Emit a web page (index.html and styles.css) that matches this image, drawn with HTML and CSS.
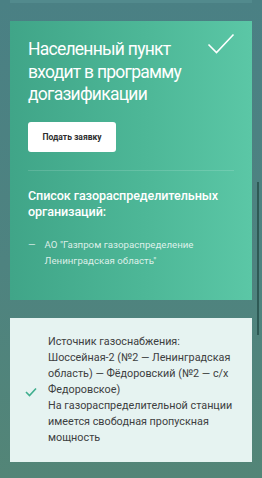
FILE: index.html
```html
<!DOCTYPE html>
<html lang="ru">
<head>
<meta charset="utf-8">
<link rel="stylesheet" href="styles.css">
</head>
<body>
<div class="page">
  <div class="prev-card"></div>
  <section class="green-card">
    <div class="head">
      <h1 class="title">Населенный пункт входит в программу догазификации</h1>
      <svg class="big-check" width="28" height="22" viewBox="0 0 28 22"><path d="M1.5 11.5 L9.5 19.5 L26.5 1.5" fill="none" stroke="#fff" stroke-width="1.6"/></svg>
    </div>
    <button class="btn">Подать заявку</button>
    <div class="divider"></div>
    <h2 class="list-title">Список газораспределительных организаций:</h2>
    <ul class="orgs">
      <li><span class="dash">—</span><span>АО "Газпром газораспределение Ленинградская область"</span></li>
    </ul>
  </section>
  <section class="info-card">
    <svg class="small-check" width="12" height="10" viewBox="0 0 12 10"><path d="M1 5 L4.5 8.5 L11 1.5" fill="none" stroke="#3fae8e" stroke-width="1.6"/></svg>
    <p class="info-text">Источник газоснабжения: Шоссейная-2 (№2 — Ленинградская область) — Фёдоровский (№2 — с/х Федоровское)<br>На газораспределительной станции имеется свободная пропускная мощность</p>
  </section>
  <div class="scrollbar"></div>
</div>
</body>
</html>
```
FILE: styles.css
```css
* { box-sizing: border-box; }
html, body { margin: 0; padding: 0; }
body {
  width: 262px;
  height: 478px;
  overflow: hidden;
  background: linear-gradient(180deg, #4a8084 0%, #4e8380 55%, #538577 100%);
  font-family: Roboto, "Noto Sans", sans-serif;
}
.page {
  position: relative;
  padding: 0 10px;
  height: 478px;
}
.prev-card {
  height: 3px;
  background: #528a8d;
}
.green-card {
  margin-top: 18px;
  height: 279px;
  padding: 17px 18px 0 18px;
  background: linear-gradient(90deg, #40a588 0%, #4db797 55%, #5bc7a6 100%);
  color: #fff;
}
.head {
  display: flex;
  justify-content: space-between;
  align-items: flex-start;
}
.title {
  margin: 0;
  font-weight: 400;
  font-size: 17.5px;
  line-height: 22.5px;
  width: 160px;
  letter-spacing: -0.75px;
}
.big-check {
  margin-top: -5px;
  margin-right: -1px;
}
.btn {
  display: block;
  margin-top: 16px;
  width: 88px;
  height: 30px;
  border: 0;
  border-radius: 3px;
  background: #fff;
  color: #2e2e2e;
  font-family: Roboto, sans-serif;
  font-weight: 700;
  font-size: 8.5px;
  padding: 0;
}
.divider {
  margin-top: 18px;
  height: 1px;
  background: rgba(255,255,255,0.14);
}
.list-title {
  margin: 17px 0 0;
  font-weight: 500;
  font-size: 12.6px;
  line-height: 16px;
  letter-spacing: -0.1px;
}
.orgs {
  list-style: none;
  margin: 17px 0 0;
  padding: 0;
  font-size: 9.7px;
  line-height: 16px;
  color: rgba(255,255,255,0.82);
}
.orgs li {
  display: flex;
  gap: 9px;
}
.dash { width: 8px; }
.info-card {
  margin-top: 18px;
  height: 144px;
  background: #e6f3f1;
  display: flex;
  align-items: center;
  padding: 0 10px 0 15px;
}
.small-check { flex: none; margin-right: 11px; margin-top: 4px; }
.info-text {
  margin: 0;
  font-size: 10.8px;
  line-height: 16px;
  color: #3d403f;
}
.scrollbar {
  position: absolute;
  left: 257px;
  top: 182px;
  width: 2px;
  height: 153px;
  background: #2e5a55;
}
```
